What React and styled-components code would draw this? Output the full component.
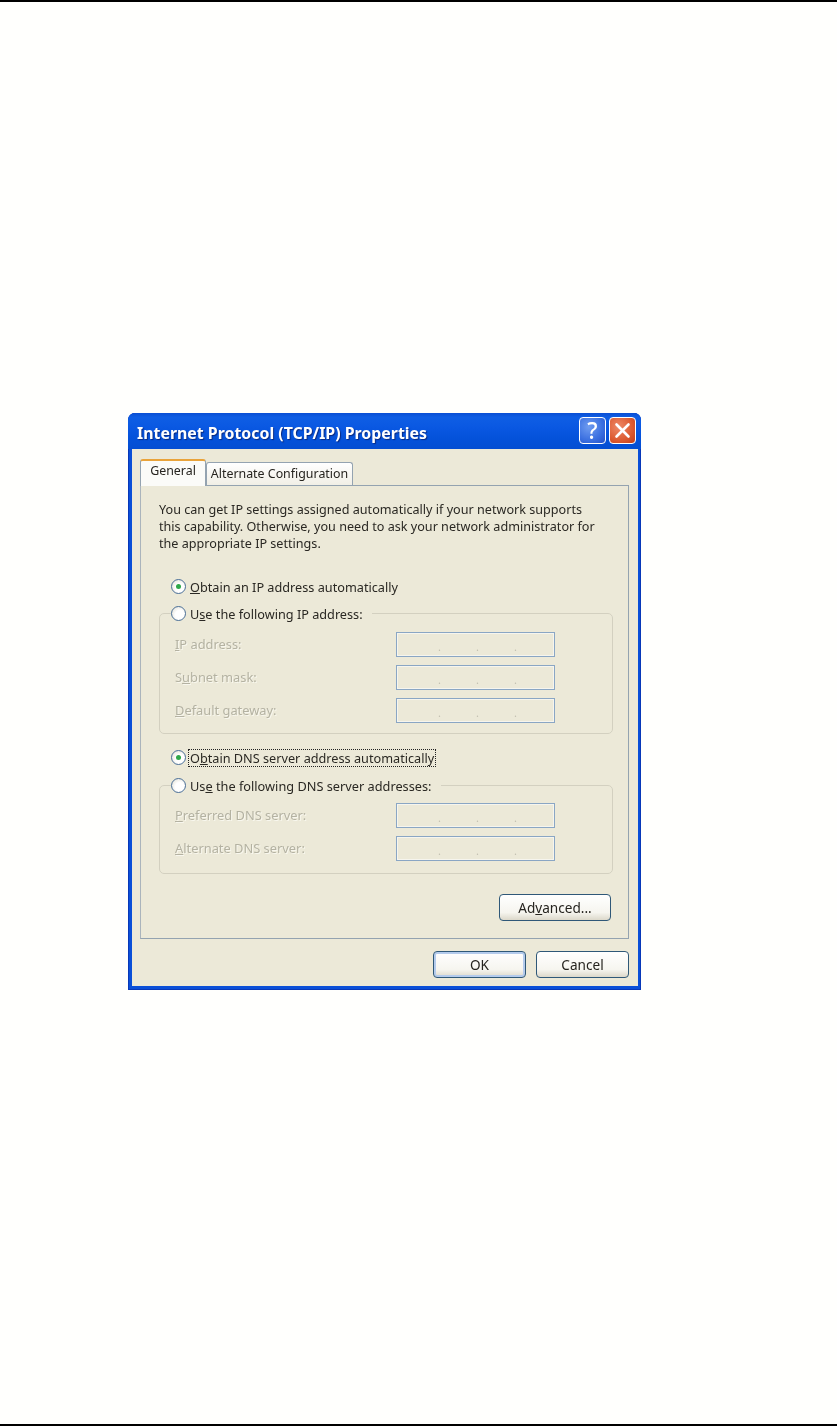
import React from "react";
import styled, { createGlobalStyle } from "styled-components";

const Global = createGlobalStyle`
  html, body { margin: 0; padding: 0; background: #fff; }
  body { font-family: "Noto Sans", "Liberation Sans", Arial, sans-serif; }
`;

const Page = styled.div`
  width: 837px;
  height: 1426px;
  box-sizing: border-box;
  display: flex;
  flex-direction: column;
  align-items: flex-start;
  justify-content: space-between;
  background: #fffffd;
`;
const Rule = styled.div`
  width: 100%;
  height: 2px;
  background: #000;
`;
const Dialog = styled.div`
  width: 513px;
  height: 577px;
  margin-left: 128px;
  margin-top: -24px;
  box-sizing: border-box;
  display: flex;
  flex-direction: column;
  background: #0a4fd8;
  border-radius: 7px 7px 0 0;
  box-shadow: inset 0 0 0 1px #0838b8;
  filter: blur(0.5px);
  overflow: hidden;
`;
const TitleBar = styled.div`
  height: 36px;
  flex: none;
  display: flex;
  align-items: center;
  padding: 0 5px 0 9px;
  background: linear-gradient(180deg, #0a4fd4 0%, #0f5ee4 12%, #0a58e2 40%, #0452da 70%, #044ed2 100%);
`;
const Title = styled.div`
  flex: 1;
  padding-top: 4px;
  color: #fff;
  font-size: 15.9px;
  font-weight: 700;
  text-shadow: 1px 1px 1px #0a2a80;
  white-space: nowrap;
`;
const CaptionButton = styled.div`
  width: 27px;
  height: 27px;
  margin-left: 3px;
  box-sizing: border-box;
  border: 1px solid #fff;
  border-radius: 4px;
  display: flex;
  align-items: center;
  justify-content: center;
  color: #fff;
  background: ${(p) =>
    p.$close
      ? "radial-gradient(circle at 35% 35%, #ee8a68, #dc5a30 60%, #c23c18)"
      : "radial-gradient(circle at 35% 35%, #6f9cf0, #3a6fe0 60%, #2450c8)"};
`;
const HelpMark = styled.span`
  font-size: 23px;
  font-weight: 500;
  line-height: 1;
`;
const Client = styled.div`
  flex: 1;
  margin: 0 3px 4px 4px;
  padding: 10px 9px 0 8px;
  background: #ece9d8;
  display: flex;
  flex-direction: column;
`;
const TabStrip = styled.div`
  display: flex;
  align-items: flex-end;
  height: 26px;
  position: relative;
  z-index: 1;
`;
const Tab = styled.div`
  box-sizing: border-box;
  width: ${(p) => p.$w}px;
  height: ${(p) => (p.$active ? 27 : 23)}px;
  margin-bottom: ${(p) => (p.$active ? -1 : 0)}px;
  display: flex;
  align-items: center;
  justify-content: center;
  font-size: 12.4px;
  color: #26241f;
  white-space: nowrap;
  border: 1px solid #94a3b0;
  border-radius: 3px 3px 0 0;
  background: ${(p) => (p.$active ? "#fbfbf8" : "linear-gradient(180deg,#fff,#f1efe6)")};
  ${(p) => (p.$active ? "border-top: 2px solid #e9a33a; border-bottom: none; padding-bottom: 5px;" : "border-bottom:none;")}
`;
const Panel = styled.div`
  box-sizing: border-box;
  width: 489px;
  height: 454px;
  border: 1px solid #94a3b0;
  border-left-color: #aab4bc;
  background: #ece9d8;
  padding: 15px 15px 0 18px;
  display: flex;
  flex-direction: column;
`;
const Intro = styled.p`
  margin: 0 0 26px;
  font-size: 12.62px;
  line-height: 17px;
  color: #2a2823;
  white-space: pre-line;
`;
const OptionRow = styled.div`
  display: flex;
  align-items: center;
  height: 18px;
  margin: ${(p) => p.$margin || "0"};
  padding-left: ${(p) => (p.$inLegend ? "0" : "12px")};
`;
const Radio = styled.span`
  box-sizing: border-box;
  width: 15px;
  height: 15px;
  flex: none;
  border-radius: 50%;
  border: 1.5px solid #4a6f98;
  background: radial-gradient(circle at 60% 60%, #fff 40%, #dcd9cc 100%);
  display: flex;
  align-items: center;
  justify-content: center;
  margin-right: 3px;
  &::after {
    content: "";
    display: ${(p) => (p.$on ? "block" : "none")};
    width: 5px;
    height: 5px;
    border-radius: 50%;
    background: #2fa84a;
  }
`;
const OptionLabel = styled.span`
  font-size: ${(p) => p.$size || 12.7}px;
  color: #2a2823;
  white-space: nowrap;
  line-height: 16px;
  padding: 0 1px;
  outline: ${(p) => (p.$focus ? "1px dotted #222" : "none")};
`;
const Group = styled.fieldset`
  margin: ${(p) => p.$margin || "0"};
  padding: ${(p) => p.$pt}px 0 ${(p) => p.$pb}px 15px;
  border: 1px solid #d3d0c0;
  border-radius: 5px;
  display: flex;
  flex-direction: column;
  gap: 8px;
  min-width: 0;
`;
const GroupLegend = styled.legend`
  padding: 0 8px 0 0;
  margin-left: -4px;
  background: #ece9d8;
`;
const FieldRow = styled.div`
  display: grid;
  grid-template-columns: 221px 159px;
  align-items: center;
  height: 25px;
`;
const FieldLabel = styled.span`
  font-size: 12.85px;
  color: #b4b2a2;
  text-shadow: 1px 1px 0 #f8f7ee;
`;
const IpBox = styled.div`
  box-sizing: border-box;
  height: 25px;
  border: 1px solid #8aa6c4;
  box-shadow: inset 0 0 0 1px #f6f5ee;
  background: #ece9d8;
  display: flex;
  align-items: flex-end;
  gap: 35px;
  padding: 0 0 3px 41px;
  font-size: 11px;
  line-height: 12px;
  color: #c4c2b2;
`;
const ButtonRow = styled.div`
  display: flex;
  justify-content: flex-end;
  gap: ${(p) => p.$gap || 0}px;
  margin: ${(p) => p.$margin || "0"};
`;
const Button = styled.div`
  box-sizing: border-box;
  width: ${(p) => p.$w}px;
  height: 27px;
  display: flex;
  align-items: center;
  justify-content: center;
  font-size: 13.6px;
  color: #26241f;
  border: 1.5px solid #2f5878;
  border-radius: 4px;
  background: linear-gradient(180deg, #fff 0%, #f6f5ef 70%, #dcd8ca 100%);
  box-shadow: ${(p) => (p.$default ? "inset 0 0 0 2px #b4cbec" : "none")};
`;

const Field = ({ mn, rest, pre = "" }) => (
  <FieldRow>
    <FieldLabel>
      {pre}
      <u>{mn}</u>
      {rest}
    </FieldLabel>
    <IpBox>
      <span>.</span>
      <span>.</span>
      <span>.</span>
    </IpBox>
  </FieldRow>
);

export default function App() {
  return (
    <Page>
      <Global />
      <Rule />
      <Dialog>
        <TitleBar>
          <Title>Internet Protocol (TCP/IP) Properties</Title>
          <CaptionButton>
            <HelpMark>?</HelpMark>
          </CaptionButton>
          <CaptionButton $close>
            <svg width="17" height="17" viewBox="0 0 17 17">
              <path d="M2.5 2.5 L14.5 14.5 M14.5 2.5 L2.5 14.5" stroke="#fff" strokeWidth="2.6" strokeLinecap="round" />
            </svg>
          </CaptionButton>
        </TitleBar>
        <Client>
          <TabStrip>
            <Tab $active $w={66}>General</Tab>
            <Tab $w={147}>Alternate Configuration</Tab>
          </TabStrip>
          <Panel>
            <Intro>
              {"You can get IP settings assigned automatically if your network supports\nthis capability. Otherwise, you need to ask your network administrator for\nthe appropriate IP settings."}
            </Intro>
            <OptionRow>
              <Radio $on />
              <OptionLabel><u>O</u>btain an IP address automatically</OptionLabel>
            </OptionRow>
            <Group $margin="9px 0 0" $pt={9} $pb={10}>
              <GroupLegend>
                <OptionRow $inLegend>
                  <Radio />
                  <OptionLabel>U<u>s</u>e the following IP address:</OptionLabel>
                </OptionRow>
              </GroupLegend>
              <Field mn="I" rest="P address:" />
              <Field pre="S" mn="u" rest="bnet mask:" />
              <Field mn="D" rest="efault gateway:" />
            </Group>
            <OptionRow $margin="15px 0 0">
              <Radio $on />
              <OptionLabel $focus>O<u>b</u>tain DNS server address automatically</OptionLabel>
            </OptionRow>
            <Group $margin="10px 0 0" $pt={8} $pb={12}>
              <GroupLegend>
                <OptionRow $inLegend>
                  <Radio />
                  <OptionLabel $size={12.75}>Us<u>e</u> the following DNS server addresses:</OptionLabel>
                </OptionRow>
              </GroupLegend>
              <Field mn="P" rest="referred DNS server:" />
              <Field mn="A" rest="lternate DNS server:" />
            </Group>
            <ButtonRow $margin="20px 2px 0 0">
              <Button $w={112}>Ad<u>v</u>anced...</Button>
            </ButtonRow>
          </Panel>
          <ButtonRow $gap={10} $margin="12px 0 0">
            <Button $w={93} $default>OK</Button>
            <Button $w={93}>Cancel</Button>
          </ButtonRow>
        </Client>
      </Dialog>
      <Rule />
    </Page>
  );
}
